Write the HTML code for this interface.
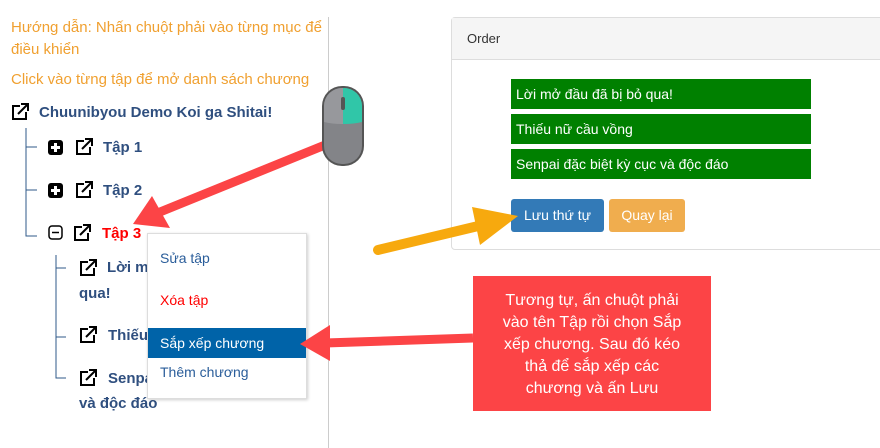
<!DOCTYPE html>
<html><head><meta charset="utf-8"><style>
body{margin:0;width:880px;height:448px;overflow:hidden;background:#fff;font-family:"Liberation Sans",sans-serif;position:relative}
.a{position:absolute;white-space:nowrap}
.or{color:#f0a030;font-size:15px}
.b{font-weight:bold;color:#2f4f7f;font-size:15px}
.g{position:absolute;left:511px;width:300px;height:30px;background:#008000;color:#fff;font-size:14px;line-height:30px;text-indent:5px}
</style></head><body>
<div class="a or" style="left:11px;top:17px;line-height:22px;white-space:normal;width:315px">Hướng dẫn: Nhấn chuột phải vào từng mục để điều khiển</div>
<div class="a or" style="left:11px;top:71px">Click vào từng tập để mở danh sách chương</div>
<div style="position:absolute;left:328px;top:17px;width:1px;height:431px;background:#ccc"></div>
<svg width="880" height="448" style="position:absolute;left:0;top:0">
<defs><g id="ex"><path d="M9 3H2v13h13V9" fill="none" stroke="#000" stroke-width="2"/><path d="M7 11L16 2M10 1h7v7" fill="none" stroke="#000" stroke-width="2"/></g>
<g id="pl"><rect x="0" y="0" width="15" height="15" rx="3" fill="#000"/><path d="M7.5 3v9M3 7.5h9" stroke="#fff" stroke-width="3"/></g></defs>
<use href="#ex" x="11" y="103"/>
<path d="M26 128V236H37M26 147H37M26 190H37" stroke="#2f5a8a" fill="none"/>
<use href="#pl" x="48" y="140"/><use href="#ex" x="75" y="138"/>
<use href="#pl" x="48" y="183"/><use href="#ex" x="75" y="181"/>
<rect x="49" y="226" width="13" height="13" rx="3" fill="none" stroke="#000" stroke-width="1.5"/><path d="M52 232.5h7" stroke="#000" stroke-width="1.5"/>
<use href="#ex" x="73" y="224"/>
<path d="M56 255V378H66M56 268H66M56 337H66" stroke="#2f5a8a" fill="none"/>
<use href="#ex" x="79" y="259"/><use href="#ex" x="79" y="326"/><use href="#ex" x="79" y="369"/>
</svg>
<div class="a b" style="left:39px;top:104px">Chuunibyou Demo Koi ga Shitai!</div>
<div class="a b" style="left:103px;top:139px">Tập 1</div>
<div class="a b" style="left:103px;top:182px">Tập 2</div>
<div class="a b" style="left:102px;top:225px;color:#f00">Tập 3</div>
<div class="a b" style="left:107px;top:259px">Lời m</div>
<div class="a b" style="left:79px;top:285px">qua!</div>
<div class="a b" style="left:108px;top:327px">Thiếu</div>
<div class="a b" style="left:108px;top:370px">Senpa</div>
<div class="a b" style="left:79px;top:395px">và độc đáo</div>
<div style="position:absolute;left:147px;top:233px;width:158px;height:164px;background:#fff;border:1px solid #ddd;box-shadow:1px 1px 3px rgba(0,0,0,.2);font-size:14px">
<div class="a" style="left:12px;top:16px;color:#2a5d9a">Sửa tập</div>
<div class="a" style="left:12px;top:58px;color:#f00">Xóa tập</div>
<div class="a" style="left:0;top:94px;width:158px;height:30px;background:#0063a8;color:#fff;line-height:30px;text-indent:12px">Sắp xếp chương</div>
<div class="a" style="left:12px;top:130px;color:#2a5d9a">Thêm chương</div>
</div>
<div style="position:absolute;left:451px;top:17px;width:440px;height:231px;border:1px solid #ddd;border-radius:4px">
<div style="height:41px;background:#f5f5f5;border-bottom:1px solid #ddd;font-size:13px;line-height:41px;padding-left:15px;color:#333">Order</div></div>
<div class="g" style="top:79px">Lời mở đầu đã bị bỏ qua!</div>
<div class="g" style="top:114px">Thiếu nữ cầu vồng</div>
<div class="g" style="top:149px">Senpai đặc biệt kỳ cục và độc đáo</div>
<div class="a" style="left:511px;top:199px;width:93px;height:33px;background:#337ab7;border-radius:3px;color:#fff;font-size:14px;line-height:33px;text-align:center">Lưu thứ tự</div>
<div class="a" style="left:609px;top:199px;width:76px;height:33px;background:#f0ad4e;border-radius:3px;color:#fff;font-size:14px;line-height:33px;text-align:center">Quay lại</div>
<div class="a" style="left:473px;top:276px;width:238px;height:135px;background:#fc4446;color:#fff;font-size:16px;line-height:22px;text-align:center;white-space:normal;padding:14px 26px 0;box-sizing:border-box">Tương tự, ấn chuột phải vào tên Tập rồi chọn Sắp xếp chương. Sau đó kéo thả để sắp xếp các chương và ấn Lưu</div>
<svg width="880" height="448" style="position:absolute;left:0;top:0">
<path d="M325 145L160 212" stroke="#fc4446" stroke-width="9"/>
<path d="M133 224L152 196L170 228Z" fill="#fc4446"/>
<path d="M473 338L325 343" stroke="#fc4446" stroke-width="9"/>
<path d="M300 344L330 325L330 361Z" fill="#fc4446"/>
<path d="M378 250L495 222" stroke="#f7a90e" stroke-width="10" stroke-linecap="round"/>
<path d="M518 216L472 207L480 245Z" fill="#f7a90e"/>
<rect x="322" y="86" width="42" height="80" rx="20" fill="#555"/>
<rect x="324" y="88" width="38" height="76" rx="18" fill="#838488"/>
<path d="M343 88a18 18 0 0 1 19 18v16a40 20 0 0 1-19 2Z" fill="#30c6a8"/>
<path d="M343 88a18 18 0 0 0-19 18v16a40 20 0 0 0 19 2Z" fill="#97989c"/>
<rect x="341" y="97" width="4" height="13" rx="2" fill="#555"/>
</svg>
</body></html>
